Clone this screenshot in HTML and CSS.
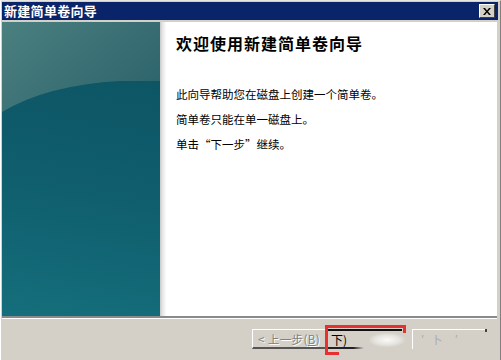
FILE: index.html
```html
<!DOCTYPE html>
<html lang="zh-CN">
<head>
<meta charset="utf-8">
<title>新建简单卷向导</title>
<link rel="stylesheet" href="styles.css">
</head>
<body>
<div class="window">
  <div class="titlebar">
    <span class="title">新建简单卷向导</span>
    <span class="close"><svg width="8" height="7" viewBox="0 0 8 7"><path d="M0 0h2l2 2.5L6 0h2L5 3.5 8 7H6L4 4.5 2 7H0l3-3.5z" fill="#000"/></svg></span>
  </div>
  <div class="main">
    <div class="sidebar">
      <svg width="158" height="294" viewBox="0 0 158 294">
        <defs>
          <linearGradient id="up" x1="0" y1="0" x2="1" y2="0.6">
            <stop offset="0" stop-color="#4b8080"/>
            <stop offset="1" stop-color="#2f666d"/>
          </linearGradient>
          <linearGradient id="low" x1="0.2" y1="0" x2="0.1" y2="1">
            <stop offset="0" stop-color="#0d5363"/>
            <stop offset="0.5" stop-color="#0f5d6d"/>
            <stop offset="1" stop-color="#156e7b"/>
          </linearGradient>
        </defs>
        <rect width="158" height="294" fill="url(#low)"/>
        <path d="M0 90 Q45 63 118 59 L158 59 L158 0 L0 0 Z" fill="url(#up)"/>
      </svg>
    </div>
    <div class="shade"></div>
    <div class="content">
      <h1 class="heading">欢迎使用新建简单卷向导</h1>
      <p class="line first">此向导帮助您在磁盘上创建一个简单卷。</p>
      <p class="line">简单卷只能在单一磁盘上。</p>
      <p class="line">单击“下一步”继续。</p>
    </div>
  </div>
  <div class="footer">
    <span class="btn back">&lt; 上一步(<u>B</u>)</span>
    <span class="btn next"><span class="nexttext">下)</span><span class="glare"></span><span class="redbox"></span></span>
    <span class="btn cancel"><span class="frag">′ &nbsp; 卜 &nbsp; &nbsp; ′</span></span>
  </div>
</div>
</body>
</html>
```

FILE: styles.css
```css
* { box-sizing: border-box; }
html, body { margin: 0; padding: 0; }
body {
  width: 501px;
  height: 360px;
  overflow: hidden;
  background: #d4d0c8;
  font-family: "Noto Sans CJK SC", "Liberation Sans", sans-serif;
}
.window {
  width: 501px;
  height: 360px;
  background: #d4d0c8;
  border-top: 1px solid #e8e6e0;
  border-left: 1px solid #ffffff;
  border-right: 1px solid #808080;
  padding: 1px 1px 0 1px;
}
.titlebar {
  height: 18px;
  background: #0a246a;
  display: flex;
  align-items: center;
  justify-content: space-between;
  padding: 0 2px 0 2px;
  margin-right: 1px;
}
.title {
  color: #fff;
  font-weight: bold;
  font-size: 13px;
  letter-spacing: 0.3px;
  line-height: 18px;
}
.close {
  width: 16px;
  height: 14px;
  background: #d4d0c8;
  border-top: 1px solid #fff;
  border-left: 1px solid #fff;
  border-right: 1px solid #404040;
  border-bottom: 1px solid #404040;
  display: flex;
  align-items: center;
  justify-content: center;
  margin-right: 1px;
}
.main {
  margin-top: 2px;
  height: 294px;
  display: flex;
  background: #fff;
  margin-right: 2px;
}
.sidebar { width: 158px; height: 294px; flex: none; }
.sidebar svg { display: block; }
.shade {
  width: 6px;
  flex: none;
  background: linear-gradient(to right, #c9c9c9, #e6e6e6 40%, #fbfbfb);
}
.content {
  flex: 1;
  padding: 11px 0 0 10px;
  color: #000;
}
.heading {
  margin: 0;
  font-size: 16px;
  letter-spacing: 1px;
  line-height: 20px;
  font-weight: bold;
}
.line {
  margin: 5px 0 0 0;
  font-size: 11.5px;
  line-height: 20px;
}
.line.first { margin-top: 31px; }
.footer {
  border-top: 2px solid #8a8a8a;
  box-shadow: inset 0 1px 0 #fff;
  margin-right: 2px;
  height: 44px;
  display: flex;
  justify-content: flex-end;
  align-items: flex-start;
  padding: 11px 11px 0 0;
}
.btn {
  height: 20px;
  font-size: 11.5px;
  line-height: 18px;
  position: relative;
  flex: none;
}
.back {
  width: 73px;
  color: #808080;
  border-top: 1px solid #fff;
  border-left: 1px solid #fff;
  border-bottom: 2px solid #555;
  padding-left: 5px;
  text-shadow: 1px 1px 0 #fff;
  font-size: 11.5px;
  letter-spacing: 0.4px;
  white-space: nowrap;
}
.back u { text-decoration: underline; }
.next {
  width: 79px;
  height: 30px;
  margin-top: -4px;
}
.next::before {
  content: "";
  position: absolute;
  left: 3px;
  top: 4px;
  width: 74px;
  height: 2px;
  background: #111;
}
.next::after {
  content: "";
  position: absolute;
  left: 3px;
  top: 22px;
  width: 36px;
  height: 2px;
  background: linear-gradient(to right, #222, #222 70%, rgba(0,0,0,0));
}
.nexttext {
  position: absolute;
  left: 6px;
  top: 6px;
  font-size: 12px;
  color: #000;
}
.glare {
  position: absolute;
  left: 44px;
  top: 8px;
  width: 36px;
  height: 14px;
  background: radial-gradient(ellipse at center, #fbfaf7 0%, rgba(255,255,255,0.4) 50%, rgba(212,208,200,0) 75%);
}
.redbox {
  position: absolute;
  left: 0;
  top: 0;
  width: 80px;
  height: 30px;
  border-top: 3px solid #e83030;
  border-left: 3px solid #e83030;
  pointer-events: none;
}
.redbox::before {
  content: "";
  position: absolute;
  right: -1px;
  top: -3px;
  width: 3px;
  height: 8px;
  background: #e83030;
}
.redbox::after {
  content: "";
  position: absolute;
  left: -3px;
  bottom: 0;
  width: 14px;
  height: 3px;
  background: #e83030;
}
.cancel {
  width: 74px;
  margin-left: 8px;
  border-top: 1px solid #fff;
  border-left: 1px solid #fff;
  color: #9a9a9a;
  padding-left: 8px;
}
.cancel::after {
  content: "";
  position: absolute;
  right: -1px;
  top: -1px;
  width: 2px;
  height: 3px;
  background: #444;
}
.frag { font-size: 11px; color: #a8a8a8; }
```
